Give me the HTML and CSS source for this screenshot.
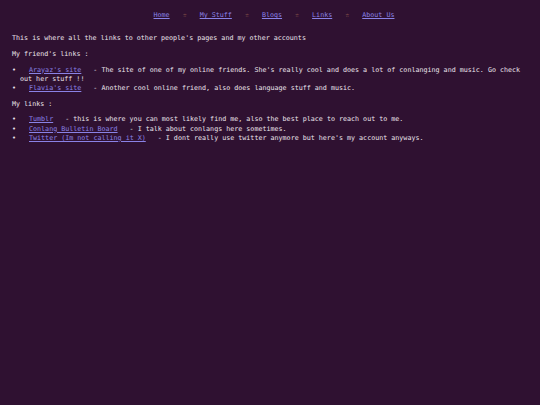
FILE: index.html
```html
<!DOCTYPE html>
<html>
<head>
<meta charset="utf-8">
<link rel="stylesheet" href="styles.css">
</head>
<body>
<nav class="nav">
  <a href="#">Home</a><span class="star">☆</span>
  <a href="#">My Stuff</a><span class="star">☆</span>
  <a href="#">Blogs</a><span class="star">☆</span>
  <a href="#">Links</a><span class="star">☆</span>
  <a href="#">About Us</a>
</nav>
<main class="content">
  <p>This is where all the links to other people's pages and my other accounts</p>
  <p>My friend's links :</p>
  <ul class="links">
    <li><a href="#">Arayaz's site</a><span class="desc">- The site of one of my online friends. She's really cool and does a lot of conlanging and music. Go check out her stuff !!</span></li>
    <li><a href="#">Flavia's site</a><span class="desc">- Another cool online friend, also does language stuff and music.</span></li>
  </ul>
  <p>My links :</p>
  <ul class="links">
    <li><a href="#">Tumblr</a><span class="desc">- this is where you can most likely find me, also the best place to reach out to me.</span></li>
    <li><a href="#">Conlang Bulletin Board</a><span class="desc">- I talk about conlangs here sometimes.</span></li>
    <li><a href="#">Twitter (Im not calling it X)</a><span class="desc">- I dont really use twitter anymore but here's my account anyways.</span></li>
  </ul>
</main>
</body>
</html>
```
FILE: styles.css
```css
html, body {
  background: #2f1131;
}
body {
  margin: 0;
  padding: 11px 12px 0 12px;
  font-family: "DejaVu Sans Mono", "Liberation Mono", monospace;
  font-size: 6.7px;
  line-height: 9.2px;
  color: #ece4ec;
}
a {
  color: #8a82e6;
  text-decoration: underline;
}
.nav {
  display: flex;
  justify-content: center;
  gap: 13px;
  margin-left: 8px;
}
.star {
  color: #c5875f;
}
.content {
  margin-top: 14px;
}
p {
  margin: 0 0 6.5px 0;
}
.links {
  margin: 0 0 6.5px 0;
  padding-left: 8px;
  list-style: disc;
}
.links li::marker {
  content: "•\00a0";
}
.links li a {
  margin-left: 9px;
  margin-right: 12px;
}
```
